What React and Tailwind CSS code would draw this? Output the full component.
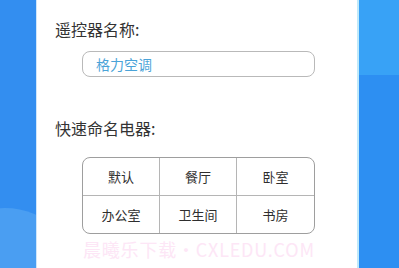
import React from "react";

const cells = ["默认", "餐厅", "卧室", "办公室", "卫生间", "书房"];

export default function App() {
  return (
    <div
      className="flex w-[399px] h-[268px] overflow-hidden bg-white"
      style={{ fontFamily: '"Noto Sans CJK SC", "Noto Sans", sans-serif' }}
    >
      <div className="relative w-[37px] h-full overflow-hidden bg-[#338ef0]">
        <div className="absolute left-[-70px] top-[208px] w-[150px] h-[150px] rounded-full bg-[#4a9ef2]" />
        <div className="absolute right-0 top-0 w-px h-full bg-[#cfe6fb]" />
      </div>
      <div className="flex-1 flex flex-col pl-[18px] pt-[17px]">
        <div className="text-[16px] leading-[24px] text-[#333]">遥控器名称:</div>
        <div className="ml-[27px] mt-[10px] w-[233px] h-[26px] rounded-[8px] border border-[#b9b9b9] flex items-center pl-[13px]">
          <span className="text-[14px] leading-none text-[#4aa3d8]">格力空调</span>
        </div>
        <div className="mt-[39px] text-[16px] leading-[24px] text-[#333]">快速命名电器:</div>
        <div className="ml-[27px] mt-[17px] w-[233px] h-[77px] rounded-[8px] border border-[#9e9e9e] grid grid-cols-3 grid-rows-2 overflow-hidden">
          {cells.map((c, i) => (
            <div
              key={c}
              className={
                "flex items-center justify-center text-[13px] text-[#2e2e2e] border-[#b5b5b5] " +
                (i % 3 !== 2 ? "border-r " : "") +
                (i < 3 ? "border-b" : "")
              }
            >
              {c}
            </div>
          ))}
        </div>
        <div className="ml-[28px] mt-[5px] text-[18px] leading-[20px] tracking-[0.8px] text-[#fde6f6] whitespace-nowrap">
          晨曦乐下载・CXLEDU.COM
        </div>
      </div>
      <div className="relative w-[42px] h-full flex flex-col">
        <div className="absolute left-0 top-0 w-[2px] h-full bg-[#bfe9fa]" />
        <div className="h-[75px] bg-[#38a2f6]" />
        <div className="flex-1 bg-[#2d8ff2]" />
      </div>
    </div>
  );
}
